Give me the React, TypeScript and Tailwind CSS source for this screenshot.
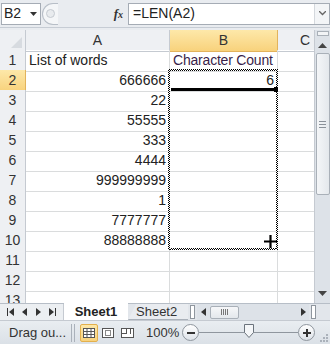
import * as React from "react";

const rows: [string, string, string][] = [
  ["1", "List of words", "Character Count"],
  ["2", "666666", "6"],
  ["3", "22", ""],
  ["4", "55555", ""],
  ["5", "333", ""],
  ["6", "4444", ""],
  ["7", "999999999", ""],
  ["8", "1", ""],
  ["9", "7777777", ""],
  ["10", "88888888", ""],
  ["11", "", ""],
  ["12", "", ""],
  ["13", "", ""],
];

const ants = "repeating-conic-gradient(#000 0 25%, #fff 0 50%) 0 0 / 2px 2px";

const App: React.FC = () => {
  return (
    <div
      className="w-[330px] h-[344px] overflow-hidden bg-[#e9ecf0] flex flex-col text-[14px] text-[#222] whitespace-nowrap"
      style={{ fontFamily: '"Liberation Sans", Arial, sans-serif' }}
    >
      {/* formula bar */}
      <div className="h-[28px] flex items-center bg-[#e9ecf0] border-b border-[#c6ccd4]">
        <div className="h-[22px] w-[40px] ml-[1px] bg-white border border-[#a5acb5] flex items-center justify-between pl-[2px] pr-[3px]">
          <span className="text-[14px]">B2</span>
          <svg width="7" height="4" viewBox="0 0 7 4"><path d="M0 0h7L3.5 4z" fill="#333" /></svg>
        </div>
        <div className="w-[16px] h-[22px] ml-[1px] rounded-l-full border border-r-0 border-[#b7bec7] bg-[#f4f6f8] flex items-center justify-center">
          <div className="w-[9px] h-[9px] rounded-full border border-[#c5cad1] bg-[#e8ebee]" />
        </div>
        <div className="flex-1 h-[22px] flex items-center justify-end pr-[5px]">
          <span className="italic font-bold text-[13px] text-[#333]" style={{ fontFamily: '"Liberation Serif", serif' }}>
            f<span className="text-[10px]">x</span>
          </span>
        </div>
        <div className="w-[202px] h-[22px] bg-white border border-[#a5acb5] flex items-center justify-between pl-[4px]">
          <span>=LEN(A2)</span>
          <div className="w-[15px] h-full border-l border-[#d4d8dd] bg-[#f3f5f7] flex items-center justify-center">
            <svg width="7" height="5" viewBox="0 0 7 5"><path d="M0 0l3.5 3.5L7 0" stroke="#666" strokeWidth="1.3" fill="none" /></svg>
          </div>
        </div>
      </div>
      <div className="h-[2px]" />

      {/* sheet + vertical scrollbar */}
      <div className="h-[273px] flex">
        <div className="flex-1 overflow-hidden bg-white relative">
          <div className="grid grid-cols-[26px_144px_108px_1fr] h-[20px] bg-[#eef0f3]">
            <div className="border-r border-b border-[#c5cad1] flex items-end justify-end p-[3px]">
              <svg width="11" height="11" viewBox="0 0 11 11"><path d="M11 0v11H0z" fill="#d7dbe0" /></svg>
            </div>
            <div className="border-r border-b border-[#c5cad1] flex items-center justify-center text-[#333]">A</div>
            <div className="border-r border-b border-[#e2b35c] bg-gradient-to-b from-[#fde8a9] to-[#f8d27c] flex items-center justify-center text-[#333]">B</div>
            <div className="border-b border-[#c5cad1] flex items-center justify-end pr-[4px] text-[#333]">C</div>
          </div>
          {rows.map(([n, a, b]) => (
            <div key={n} className="grid grid-cols-[26px_144px_108px_1fr] h-[20px]">
              <div
                className={
                  n === "2"
                    ? "border-r border-b border-[#e2b35c] bg-gradient-to-b from-[#fde8a9] to-[#f8d27c] flex items-center justify-center text-[#333]"
                    : "border-r border-b border-[#c5cad1] bg-[#eef0f3] flex items-center justify-center text-[#333]"
                }
              >
                {n}
              </div>
              <div className={"border-r border-b border-[#dadcdd] flex items-center px-[3px] overflow-hidden " + (n === "1" ? "justify-start" : "justify-end")}>
                {a}
              </div>
              <div className={"border-r border-b border-[#dadcdd] flex items-center px-[3px] overflow-hidden " + (n === "1" ? "justify-start text-[#3a1f4a] tracking-[-0.2px]" : "justify-end")}>
                {b}
              </div>
              <div className="border-b border-[#dadcdd]" />
            </div>
          ))}
          {/* copy marquee around B2:B10 */}
          <div className="absolute left-[168px] top-[39px] w-[110px] h-[2px]" style={{ background: ants }} />
          <div className="absolute left-[168px] top-[218px] w-[110px] h-[2px]" style={{ background: ants }} />
          <div className="absolute left-[168px] top-[39px] w-[2px] h-[181px]" style={{ background: ants }} />
          <div className="absolute left-[276px] top-[39px] w-[2px] h-[181px]" style={{ background: ants }} />
          {/* active cell bottom edge */}
          <div className="absolute left-[171px] top-[58px] w-[104px] h-[3px] bg-black" />
          <div className="absolute left-[274px] top-[57px] w-[4px] h-[5px] bg-black" />
          {/* fill cursor */}
          <svg className="absolute left-[264px] top-[205px]" width="13" height="13" viewBox="0 0 13 13">
            <path d="M6.5 0v13M0 6.5h13" stroke="#000" strokeWidth="2.2" />
          </svg>
        </div>
        <div className="w-[16px] bg-[#dde2e8] border-l border-[#c5cad1] flex flex-col items-center">
          <div className="w-[12px] h-[5px] mt-[1px] border border-[#a9b0b8] bg-[#f2f4f6]" />
          <div className="h-[12px] mt-[3px] flex items-center">
            <svg width="9" height="5" viewBox="0 0 9 5"><path d="M0 5L4.5 0 9 5z" fill="#444" /></svg>
          </div>
          <div className="w-[14px] h-[142px] mt-[2px] rounded-[2px] border border-[#a9b0b8] bg-gradient-to-r from-[#f4f6f8] to-[#e4e8ec] flex flex-col items-center justify-center gap-[2px]">
            <div className="w-[7px] h-px bg-[#8a9199]" />
            <div className="w-[7px] h-px bg-[#8a9199]" />
            <div className="w-[7px] h-px bg-[#8a9199]" />
          </div>
          <div className="flex-1" />
          <div className="h-[12px] mb-[4px] flex items-center">
            <svg width="9" height="5" viewBox="0 0 9 5"><path d="M0 0h9L4.5 5z" fill="#444" /></svg>
          </div>
        </div>
      </div>

      {/* sheet tabs */}
      <div className="h-[17px] flex items-stretch bg-[#e2e6eb] border-t border-[#b7bec7]">
        <div className="w-[64px] flex items-center justify-around px-[3px] bg-[#eceff2] border-r border-[#c5cad1]">
          <svg width="7" height="8" viewBox="0 0 7 8"><path d="M0.5 0v8" stroke="#333" /><path d="M7 0v8L2 4z" fill="#333" /></svg>
          <svg width="5" height="8" viewBox="0 0 5 8"><path d="M5 0v8L0 4z" fill="#333" /></svg>
          <svg width="5" height="8" viewBox="0 0 5 8"><path d="M0 0v8l5-4z" fill="#333" /></svg>
          <svg width="7" height="8" viewBox="0 0 7 8"><path d="M0 0v8l5-4z" fill="#333" /><path d="M6.5 0v8" stroke="#333" /></svg>
        </div>
        <div className="relative w-[64px] bg-white -mt-px flex items-center justify-center font-bold text-[13px] text-[#222]">
          Sheet1
        </div>
        <div
          className="w-[60px] bg-[#e9ecf0] border-b border-[#aab1ba] flex items-center pl-[8px] text-[13px] text-[#333]"
          style={{ clipPath: "polygon(8px 0, 100% 0, 100% 100%, 0 100%)" }}
        >
          Sheet2
        </div>
        <div className="w-[5px] mx-[2px] my-[1px] border border-[#8f969e] bg-white" />
        <div className="flex-1 flex items-center bg-[#dde2e8]">
          <svg className="ml-[4px]" width="5" height="8" viewBox="0 0 5 8"><path d="M5 0v8L0 4z" fill="#333" /></svg>
          <div className="ml-[4px] w-[29px] h-[13px] rounded-[2px] border border-[#a9b0b8] bg-gradient-to-b from-[#f6f7f9] to-[#e4e8ec] flex items-center justify-center gap-[1px]">
            <div className="w-px h-[6px] bg-[#777]" />
            <div className="w-px h-[6px] bg-[#777]" />
            <div className="w-px h-[6px] bg-[#777]" />
            <div className="w-px h-[6px] bg-[#777]" />
          </div>
          <div className="flex-1" />
          <svg className="mr-[3px]" width="5" height="8" viewBox="0 0 5 8"><path d="M0 0v8l5-4z" fill="#333" /></svg>
        </div>
        <div className="w-[5px] mx-[2px] my-[1px] border border-[#8f969e] bg-white" />
        <div className="w-[12px]" />
      </div>

      {/* status bar */}
      <div className="h-[24px] flex items-center bg-gradient-to-b from-[#e9edf1] to-[#dbe1e7] border-t border-[#c5cad1] text-[13px] text-[#333]">
        <span className="ml-[9px] w-[62px] whitespace-nowrap">Drag ou...</span>
        <div className="h-[18px] flex gap-[2px]">
          <div className="w-px bg-[#aab1ba]" />
          <div className="w-px bg-[#aab1ba]" />
        </div>
        <div className="ml-[5px] w-[18px] h-[18px] rounded-[2px] border border-[#e3b04c] bg-gradient-to-b from-[#fde8a9] to-[#f8d27c] flex items-center justify-center">
          <svg width="12" height="10" viewBox="0 0 12 10"><rect x="0.5" y="0.5" width="11" height="9" fill="#fff" stroke="#555" /><path d="M4 0v10M8 0v10M0 3.5h12M0 6.5h12" stroke="#555" /></svg>
        </div>
        <div className="ml-[4px] w-[12px] h-[10px] border border-[#555] bg-white flex items-center justify-center">
          <div className="w-[6px] h-[6px] border border-[#888]" />
        </div>
        <div className="ml-[7px] w-[13px] h-[10px] border border-[#555] bg-white flex">
          <div className="w-[5px] h-[5px] border-r border-b border-[#555]" />
          <div className="w-[4px] h-[5px] border-r border-[#555]" />
        </div>
        <span className="ml-[12px]">100%</span>
        <div className="ml-[3px] w-[17px] h-[17px] rounded-full border border-[#8f969e] bg-gradient-to-b from-white to-[#dde2e8] flex items-center justify-center">
          <div className="w-[8px] h-[2px] bg-[#333]" />
        </div>
        <div className="relative w-[99px] h-px bg-[#8f969e] flex items-center">
          <svg className="absolute left-[45px] top-[-8px]" width="10" height="14" viewBox="0 0 10 14">
            <path d="M0.5 0.5h9v8L5 13.5 0.5 8.5z" fill="#f4f6f8" stroke="#6b737c" />
          </svg>
        </div>
        <div className="w-[17px] h-[17px] rounded-full border border-[#8f969e] bg-gradient-to-b from-white to-[#dde2e8] flex items-center justify-center relative">
          <div className="w-[8px] h-[2px] bg-[#333]" />
          <div className="absolute w-[2px] h-[8px] bg-[#333]" />
        </div>
        <div className="ml-auto mr-[2px] self-end mb-[2px]">
          <svg width="8" height="8" viewBox="0 0 8 8">
            <rect x="6" y="0" width="2" height="2" fill="#aab1ba" />
            <rect x="3" y="3" width="2" height="2" fill="#aab1ba" />
            <rect x="6" y="3" width="2" height="2" fill="#aab1ba" />
            <rect x="0" y="6" width="2" height="2" fill="#aab1ba" />
            <rect x="3" y="6" width="2" height="2" fill="#aab1ba" />
            <rect x="6" y="6" width="2" height="2" fill="#aab1ba" />
          </svg>
        </div>
      </div>
    </div>
  );
};

export default App;
